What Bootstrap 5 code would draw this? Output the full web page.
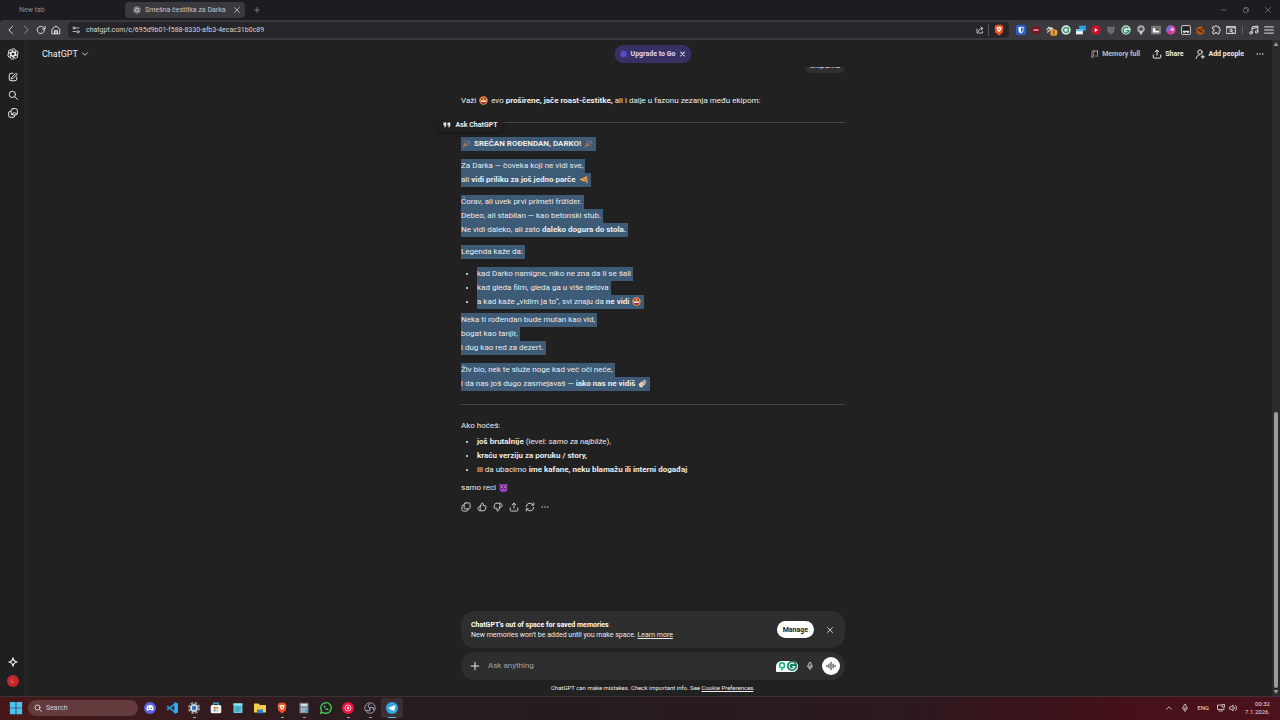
<!DOCTYPE html>
<html lang="sr-Latn" data-bs-theme="dark">
<head>
<meta charset="utf-8">
<meta name="viewport" content="width=device-width, initial-scale=1">
<title>Smešna čestitka za Darka</title>
<link href="https://cdn.jsdelivr.net/npm/bootstrap@5.3.0/dist/css/bootstrap.min.css" rel="stylesheet">
<style>
  body { font-family: Roboto, "Noto Sans", sans-serif; font-size: 8px; line-height: 14px; color: #ececec; background: #212121; }
  button, input { font: inherit; color: inherit; background: none; border: 0; padding: 0; line-height: inherit; }
  button { display: inline-flex; align-items: center; justify-content: center; }
  button svg { display: block; }
  b, strong { font-weight: 700; }
  svg.ln { fill: none; stroke: currentColor; stroke-width: 1.6; stroke-linecap: round; stroke-linejoin: round; }
  .s8 { width: 8px; height: 8px; } .s10 { width: 10px; height: 10px; } .s12 { width: 12px; height: 12px; } .s14 { width: 14px; height: 14px; }

  .tabstrip { height: 20px; background: #1d1c22; font-size: 7px; color: #8d8c92; }
  .tab-idle { width: 125px; padding-left: 19px; }
  .tab-live { width: 120px; height: 16px; background: #3a393f; border-radius: 4px; color: #c4c3c8; }
  .winbtns { gap: 14px; color: #77767c; }
  .toolbar { height: 20px; background: #3a393e; border-radius: 4px 0 0 0; color: #dcdcdf; }
  .navbtns { width: 68px; padding-left: 6px; gap: 5px; }
  .urlfield { height: 16px; background: #26252a; border-radius: 4px; gap: 6px; }
  .urlfield input { font-size: 7px; color: #d6d6d9; outline: 0; }
  .exts { gap: 5px; padding: 0 6px 0 7px; }
  .exts svg { width: 10px; height: 10px; }
  .exts .vr { margin: 3px 1px; }

  .rail { width: 26px; background: #1f1f1f; border-right: 1px solid #2c2c2c; padding: 8px 0 9px; gap: 8px; }
  .avatar { width: 12px; height: 12px; border-radius: 50%; background: #c3272d; font-size: 5px; color: #f2a9ab; }
  .chathead { height: 27px; font-size: 8px; }
  .chathead .title { font-size: 9px; gap: 3px; }
  .upgrade { height: 18px; padding: 0 5px; gap: 3px; border-radius: 9px; background: #373064; color: #dedafa; font-weight: 700; font-size: 7px; left: 50%; transform: translateX(-50%); }
  .acts { gap: 12px; font-size: 7px; font-weight: 700; }
  .acts button { gap: 3px; }

  .thread { width: 384px; max-width: 100%; }
  .thread p { margin-bottom: 8px; }
  .thread ul { padding-left: 16px; margin-bottom: 4px; }
  .thread hr { margin: 0; border-top: 1px solid #454545; opacity: 1; }
  .bubble { background: #2f2f2f; border-radius: 0 0 7px 7px; height: 6px; width: 40px; overflow: hidden; }
  .sel { display: block; width: fit-content; background: #3d5a76; padding-right: 2px; white-space: nowrap; }
  .emo { width: 9px; height: 9px; margin: 0 1px; vertical-align: -2px; }
  .askpop { left: -23px; top: 51px; height: 14px; width: 65px; gap: 4px; background: #202020; border-radius: 5px; box-shadow: 0 2px 4px rgba(0,0,0,.35); font-size: 7px; font-weight: 700; }
  .replyacts { gap: 6px; margin-top: 7px; color: #c9c9c9; }

  .notice { height: 37px; background: #2e2e2e; border-radius: 14px; padding: 0 11px 0 10px; font-size: 7px; line-height: 10px; }
  .manage { height: 17px; padding: 0 6px; border-radius: 9px; background: #fff; color: #1a1a1a; font-weight: 700; }
  .composer { height: 28px; background: #2e2e2e; border-radius: 14px; padding: 0 5px 0 9px; margin-top: 4px; }
  .composer input { outline: 0; font-size: 8px; }
  .composer input::placeholder { color: #a3a3a3; opacity: 1; }
  .grammar { width: 22px; height: 11px; background: #fff; border-radius: 6px 6px 6px 1px; }
  .voice { width: 18px; height: 18px; border-radius: 50%; background: #fff; color: #222; }
  .fineprint { font-size: 6px; height: 16px; }
  .fineprint a, .notice a { color: inherit; }
  .scroller { width: 8px; background: #2b2b2b; color: #9a9a9a; }
  .thumb { width: 4px; background: #9c9c9c; border-radius: 2px; margin-top: auto; height: 42%; }

  .taskbar { height: 24px; border-top: 1px solid #3d3133; padding: 0 0 1px 9px; background: linear-gradient(90deg, #481718 0, #3c1a1d 10%, #2c1c20 24%, #251d20 38%, #2b1a1e 70%, #451019 88%, #4b121c 100%); }
  .tasksearch { width: 110px; height: 16px; border-radius: 8px; background: #643b3c; padding-left: 6px; gap: 4px; margin: 0 1px 0 5px; }
  .tasksearch input { font-size: 7px; outline: 0; } .tasksearch input::placeholder { color: #d8cccc; opacity: 1; }
  .task { width: 22px; height: 20px; position: relative; border-radius: 3px; }
  .task.run::after { content: ""; position: absolute; bottom: 0; width: 3px; height: 1px; background: #a99ea0; }
  .task.cur { background: #3a2f33; } .task.cur::after { width: 8px; background: #5ab8e6; }
  .tray { gap: 8px; font-size: 6px; line-height: 8px; color: #e9dcde; padding-right: 10px; }
</style>
</head>
<body>
<svg class="d-none" aria-hidden="true">
  <symbol id="gpt" viewBox="0 0 24 24"><g fill="none" stroke="currentColor" stroke-width="1.8"><path id="petal" d="M12 7.2 7.8 9.6v6.6M12 7.2l5.3 3V5.8a4.3 4.3 0 0 0-8-2.2"/><use href="#petal" transform="rotate(60 12 12)"/><use href="#petal" transform="rotate(120 12 12)"/><use href="#petal" transform="rotate(180 12 12)"/><use href="#petal" transform="rotate(240 12 12)"/><use href="#petal" transform="rotate(300 12 12)"/></g></symbol>
  <symbol id="x" viewBox="0 0 16 16"><path d="m3 3 10 10M13 3 3 13"/></symbol>
  <symbol id="dots" viewBox="0 0 16 16"><g fill="currentColor" stroke="none"><circle cx="2.5" cy="8" r="1.5"/><circle cx="8" cy="8" r="1.5"/><circle cx="13.5" cy="8" r="1.5"/></g></symbol>
  <symbol id="share" viewBox="0 0 16 16"><path d="M8 10V2M5 4.500 8 1.500l3 3M2 9.500v3.500a1.500 1.500 0 0 0 1.500 1.500h9A1.500 1.500 0 0 0 14 13V9.500"/></symbol>
  <symbol id="search" viewBox="0 0 16 16"><circle cx="7" cy="7" r="5"/><path d="m11 11 4 4"/></symbol>
  <symbol id="mic" viewBox="0 0 16 16"><rect x="5.500" y="1" width="5" height="8.500" rx="2.500"/><path d="M3 7.500a5 5 0 0 0 10 0M8 12.500V15"/></symbol>
  <symbol id="laugh" viewBox="0 0 16 16"><circle cx="8" cy="8" r="7.500" fill="#f0a040"/><path d="M1.500 4.500a7.500 7.500 0 0 1 13 0z" fill="#e0605a"/><path d="m3.500 4.500 3 1.300-3 1.300M12.500 4.500l-3 1.300 3 1.300" fill="none" stroke="#4a2a22" stroke-width="1.200"/><path d="M2.500 8.500h11a5.500 5.500 0 0 1-11 0z" fill="#a82348"/><path d="M3.500 8.500h9v2h-9z" fill="#fff"/></symbol>
  <symbol id="party" viewBox="0 0 16 16"><path d="m1 15 4-9 5 5z" fill="#b0805c"/><path d="m2.500 12 2 2M4 8.500l4 4" stroke="#7a4d5d"/><path d="M7 6c0-3 2-3 1-5M10 9c3 0 3-2 5-1" stroke="#b0607c" stroke-width="1.400" fill="none"/><path d="M8.500 7.500 13 3" stroke="#5f9ac9" stroke-width="1.600"/><g fill="#c9695c"><circle cx="4" cy="3" r="1"/><circle cx="13" cy="12" r="1"/><circle cx="14" cy="5.500" r="1"/></g></symbol>
  <symbol id="brave" viewBox="0 0 16 16"><path d="M4.500 1h7L14 4l-1 7-5 4.500L3 11 2 4z" fill="#f2501e"/><path d="m4.500 4.500 3.500-.8 3.500.8-1 3.500L8 11 5.500 8z" fill="#fff"/><path d="M6.500 6h3L8 8.500z" fill="#f2501e"/></symbol>
  <symbol id="thumb" viewBox="0 0 16 16"><path d="M5 7 8 1.500c1.800 0 2.300 1 2 2.500L9.500 6H13c1.300 0 1.700 1 1.400 2l-1.300 4.500c-.3 1-1 1.500-2 1.500H5.500C3 14 1.500 12.800 1.500 10.500S3 7 5 7zM5 7v7"/></symbol>
</svg>

<div class="vh-100 d-flex flex-column overflow-hidden">
  <header>
    <div class="tabstrip d-flex align-items-center">
      <div class="tab-idle">New tab</div>
      <div class="tab-live d-flex align-items-center px-1">
        <svg class="s8 ms-1 me-1"><use href="#gpt"/></svg><span class="flex-fill">Smešna čestitka za Darka</span>
        <button aria-label="Zatvori karticu"><svg class="ln s8"><use href="#x"/></svg></button>
      </div>
      <button class="ms-2" aria-label="Nova kartica"><svg class="ln s8" viewBox="0 0 16 16"><path d="M8 3v10M3 8h10"/></svg></button>
      <div class="winbtns d-flex ms-auto me-2">
        <button aria-label="Umanji"><svg class="ln s8" viewBox="0 0 16 16"><path d="M3 8h9"/></svg></button>
        <button aria-label="Vrati"><svg class="ln s8" viewBox="0 0 16 16"><rect x="3" y="5" width="8" height="8" rx="2"/><path d="M6 3h5a2 2 0 0 1 2 2v5"/></svg></button>
        <button aria-label="Zatvori"><svg class="ln s8"><use href="#x"/></svg></button>
      </div>
    </div>
    <div class="toolbar d-flex align-items-center">
      <div class="navbtns d-flex align-items-center">
        <button aria-label="Nazad"><svg class="ln s10" viewBox="0 0 16 16"><path d="M10.500 2 4.500 8l6 6"/></svg></button>
        <button aria-label="Napred" class="opacity-50"><svg class="ln s10" viewBox="0 0 16 16"><path d="m5.500 2 6 6-6 6"/></svg></button>
        <button aria-label="Osveži"><svg class="ln s10" viewBox="0 0 16 16"><path d="M13.500 8A5.800 5.800 0 1 1 12 4l2 2M14.500 2v4.500H10"/></svg></button>
        <button aria-label="Početna"><svg class="ln s10" viewBox="0 0 16 16"><path d="M2 6.500 8 1.500l6 5V14H2zM5.500 14V9h5v5M8 9v5"/></svg></button>
      </div>
      <div class="urlfield flex-fill d-flex align-items-center px-1">
        <svg class="ln s8" viewBox="0 0 16 16"><circle cx="4" cy="4" r="2.200"/><path d="M8 4h6M2 11h6"/><circle cx="12" cy="11.500" r="2.200"/></svg>
        <input class="flex-fill" aria-label="Adresa" value="chatgpt.com/c/695d9b01-f588-8330-afb3-4ecac31b0c89">
        <div class="d-flex align-items-center gap-1">
          <svg class="ln s8" viewBox="0 0 16 16"><path d="M2 6v8h11v-3M5 11c0-4 3-6 8-6M10 2l4 3-4 3"/></svg>
          <span class="vr"></span>
          <svg class="s12"><use href="#brave"/></svg>
        </div>
      </div>
      <div class="exts d-flex align-items-center">
        <svg viewBox="0 0 16 16"><rect width="16" height="16" rx="3" fill="#2460cf"/><path d="M4 3h8v5c0 3-2 4.500-4 5.500C6 12.500 4 11 4 8z" fill="#fff"/><path d="M8 4.500h2.800V8c0 2-1.300 3-2.800 3.900z" fill="#2460cf"/></svg>
        <svg viewBox="0 0 16 16"><ellipse cx="8" cy="8" rx="7.500" ry="6" fill="#7d1420"/><path d="M4 6.500h8v3H4z" fill="#c98f98"/></svg>
        <svg viewBox="0 0 16 16" overflow="visible"><path d="M1 8c3-5 8-5 11-1M3 3l8 6M2 12l5-5" fill="none" stroke="#d5d0ce" stroke-width="2"/><rect x="7" y="7" width="11" height="10" rx="3" fill="#e9a13b"/><path d="M12.500 9v6" stroke="#4a3010" stroke-width="1.500"/></svg>
        <svg viewBox="0 0 16 16"><circle cx="8" cy="8" r="7.500" fill="#e4f0ea"/><circle cx="8" cy="8" r="4" fill="none" stroke="#3c9973" stroke-width="2.500"/></svg>
        <svg viewBox="0 0 16 16"><path d="M5 1h11v8H5z" fill="#2d9cdb"/><path d="M0 7h11v8H0z" fill="#eef7fb"/><path d="M0 7h11v3H0z" fill="#53b8e8"/></svg>
        <svg viewBox="0 0 16 16"><circle cx="8" cy="8" r="7.500" fill="#c9102a"/><path d="m6 5 5 3-5 3z" fill="#fff"/></svg>
        <svg viewBox="0 0 16 16"><path d="m2 2 3 1h6l3-1-1 9-5 4-5-4z" fill="#747477"/><path d="M5 7h2M9 7h2M8 10v2" stroke="#37373a" stroke-width="1.500"/></svg>
        <svg viewBox="0 0 16 16"><circle cx="8" cy="8" r="7.500" fill="#cfe5da"/><path d="M11.500 5A4.800 4.800 0 1 0 12.800 9H8.500" fill="none" stroke="#21875f" stroke-width="2"/></svg>
        <svg viewBox="0 0 16 16"><circle cx="8" cy="6.500" r="6" fill="#a7a7aa"/><circle cx="8" cy="6.500" r="3" fill="#4b4b4e"/><path d="M6 9h4v6H6z" fill="#c9c9cb"/></svg>
        <svg viewBox="0 0 16 16"><rect x="0" y="1" width="16" height="14" rx="2" fill="#77777b"/><rect x="3" y="5" width="10" height="7" fill="#fff"/><rect x="7" y="5" width="6" height="4" fill="#55555a"/></svg>
        <svg viewBox="0 0 16 16"><circle cx="8" cy="8" r="7.500" fill="#d44192"/><path d="M8 .5A7.500 7.500 0 0 0 1 11l7-3z" fill="#7c66dd"/><circle cx="10" cy="7" r="3" fill="#f4a8c9"/></svg>
        <svg viewBox="0 0 16 16"><rect x="1" y="1" width="14" height="14" rx="1" fill="#222" stroke="#ddd" stroke-width="1.500"/><path d="M3 9h10v2l-2 2-3-2-3 2-2-2z" fill="#ddd"/></svg>
        <svg viewBox="0 0 16 16"><circle cx="7" cy="9" r="6.500" fill="#b65317"/><path d="m8 8 6-6M3 7l7 5" stroke="#442516" stroke-width="2"/></svg>
        <svg class="ln" viewBox="0 0 16 16"><path d="M3 3h3a2 2 0 0 1 4 0h3v3a2 2 0 0 1 0 4v4h-3a2 2 0 0 0-4 0H3v-4a2 2 0 0 0 0-4z"/></svg>
        <svg class="ln" viewBox="0 0 16 16"><path d="M1 2.500h14v11H1zM1 4.500h14"/><circle cx="8" cy="9" r="2"/><path d="m9.500 10.500 2 2"/></svg>
        <span class="vr"></span>
        <svg class="ln" viewBox="0 0 16 16"><path d="M5 12V3l9-1.500v9M5 5.500 14 4"/><circle cx="3.200" cy="12.500" r="2"/><circle cx="12.200" cy="11" r="2"/></svg>
        <svg class="ln" viewBox="0 0 16 16"><path d="M1 3h14M1 8h14M1 13h14"/></svg>
      </div>
    </div>
  </header>

  <div class="d-flex flex-fill position-relative" style="min-height:0">
    <nav class="rail d-flex flex-column align-items-center">
      <button class="mb-1" aria-label="ChatGPT"><svg class="s12"><use href="#gpt"/></svg></button>
      <button class="mt-px" aria-label="Novi razgovor"><svg class="ln s10" viewBox="0 0 16 16"><path d="M8 2H5a3 3 0 0 0-3 3v6a3 3 0 0 0 3 3h6a3 3 0 0 0 3-3V8M6 8.500 12 2.500a1.400 1.400 0 0 1 2 2L8 10.500l-2.500.5z"/></svg></button>
      <button aria-label="Pretraga"><svg class="ln s10"><use href="#search"/></svg></button>
      <button aria-label="Slike"><svg class="ln s10" viewBox="0 0 16 16"><rect x="5" y="1" width="10" height="10" rx="3"/><path d="M4 5a3 3 0 0 0-3 3v4a3 3 0 0 0 3 3h4a3 3 0 0 0 3-3M5 11l5-4 4 3"/></svg></button>
      <button class="mt-auto" aria-label="Nadogradi"><svg class="ln s10" viewBox="0 0 16 16"><path d="M8 1.500C8.500 5 11 7.500 14.500 8 11 8.500 8.500 11 8 14.500 7.500 11 5 8.500 1.500 8 5 7.500 7.500 5 8 1.500z" stroke-width="2"/></svg></button>
      <button class="avatar" aria-label="Nalog">L</button>
    </nav>

    <main class="flex-fill d-flex flex-column position-relative">
      <div class="chathead d-flex align-items-center justify-content-between ps-3 pe-3 position-relative">
        <button class="title">ChatGPT <svg class="ln s8" viewBox="0 0 16 16"><path d="m3 5.500 5 5 5-5"/></svg></button>
        <button class="upgrade position-absolute text-nowrap"><svg class="s8" viewBox="0 0 16 16"><path d="M8 0l2 3 4-1-1 4 3 2-3 2 1 4-4-1-2 3-2-3-4 1 1-4-3-2 3-2-1-4 4 1z" fill="#5a49d6"/></svg>Upgrade to Go<svg class="ln s8" viewBox="-3 -3 22 22"><path d="m3 3 10 10M13 3 3 13" stroke-width="3"/></svg></button>
        <div class="acts d-flex align-items-center">
          <button class="text-nowrap opacity-75"><svg class="ln s8" viewBox="0 0 16 16"><path d="M2 14V4a2 2 0 0 1 2-2h9v7M2 14h3M6 2v3M9 12h5M13 2v3M5 8v3"/></svg>Memory full</button>
          <button><svg class="ln s10"><use href="#share"/></svg>Share</button>
          <button><svg class="ln s10" viewBox="0 0 16 16"><circle cx="8" cy="5" r="3.500"/><path d="M2 15c0-3 2-5 5-5.500M12.500 10v5M10 12.500h5"/></svg>Add people</button>
          <button aria-label="Još"><svg class="s8"><use href="#dots"/></svg></button>
        </div>
      </div>

      <section class="thread mx-auto flex-fill position-relative">
        <div class="bubble ms-auto d-flex align-items-end justify-content-center"><span>ekipama</span></div>
        <p style="margin-top:21px;margin-bottom:14px">Važi <svg class="emo"><use href="#laugh"/></svg> evo <b>proširene, jače roast-čestitke,</b> ali i dalje u fazonu zezanja među ekipom:</p>
        <hr>
        <button class="askpop position-absolute"><svg class="s8" viewBox="0 0 16 16"><path d="M1 3h5.500v5c0 3-1.500 4.500-4 5v-2c1-.3 1.600-1 1.700-2H1zM9 3h5.500v5c0 3-1.500 4.500-4 5v-2c1-.3 1.600-1 1.700-2H9z" fill="currentColor"/></svg>Ask ChatGPT</button>
        <p style="margin-top:14px"><span class="sel"><svg class="emo"><use href="#party"/></svg> <b>SREĆAN ROĐENDAN, DARKO!</b> <svg class="emo"><use href="#party"/></svg></span></p>
        <p><span class="sel">Za Darka — čoveka koji ne vidi sve,</span><span class="sel">ali <b>vidi priliku za još jedno parče</b> <svg class="emo" viewBox="0 0 16 16"><path d="M1 8 13 2l2 12z" fill="#f1b84b"/><path d="m12 1 3 1 1 12-2 1z" fill="#c27a32"/><circle cx="9" cy="7" r="1.500" fill="#c93a2c"/><circle cx="11" cy="11" r="1.500" fill="#c93a2c"/></svg></span></p>
        <p><span class="sel">Ćorav, ali uvek prvi primeti frižider.</span><span class="sel">Debeo, ali stabilan — kao betonski stub.</span><span class="sel">Ne vidi daleko, ali zato <b>daleko dogura do stola.</b></span></p>
        <p><span class="sel">Legenda kaže da:</span></p>
        <ul>
          <li><span class="sel">kad Darko namigne, niko ne zna da li se šali</span></li>
          <li><span class="sel">kad gleda film, gleda ga u više delova</span></li>
          <li><span class="sel">a kad kaže „vidim ja to“, svi znaju da <b>ne vidi</b> <svg class="emo"><use href="#laugh"/></svg></span></li>
        </ul>
        <p><span class="sel">Neka ti rođendan bude mutan kao vid,</span><span class="sel">bogat kao tanjir,</span><span class="sel">i dug kao red za dezert.</span></p>
        <p><span class="sel">Živ bio, nek te služe noge kad već oči neće,</span><span class="sel">i da nas još dugo zasmejavaš — <b>iako nas ne vidiš</b> <svg class="emo" viewBox="0 0 16 16"><path d="m1 9 6-5 4 6-4 5-4-1z" fill="#e6d9c5"/><path d="m8 3 4-2 3 4-3 6-2-1z" fill="#cdb795"/><path d="m5 8 3 4M10 3l3 4" stroke="#8a7a66"/></svg></span></p>
        <hr style="margin-top:13px">
        <p style="margin-top:14px;margin-bottom:2px">Ako hoćeš:</p>
        <ul>
          <li><b>još brutalnije</b> (level: <i>samo za najbliže</i>),</li>
          <li><b>kraću verziju za poruku / story,</b></li>
          <li>ili da ubacimo <b>ime kafane, neku blamažu ili interni događaj</b></li>
        </ul>
        <p class="mb-0">samo reci <svg class="emo" viewBox="0 0 16 16"><path d="M1 1l3 1h8l3-1v9a7 6 0 0 1-14 0z" fill="#9b3fc0"/><path d="M2 6h12l-1 4H9.500L8 8l-1.500 2H3z" fill="#4a1f66"/><path d="M3.500 7.500h3M9.500 7.500h3" stroke="#fff" stroke-width="1.500"/></svg></p>
        <div class="replyacts d-flex">
          <button aria-label="Kopiraj"><svg class="ln s10" viewBox="0 0 16 16"><rect x="5" y="1.500" width="9.500" height="9.500" rx="2"/><path d="M5 5H3.500a2 2 0 0 0-2 2v5.500a2 2 0 0 0 2 2H9a2 2 0 0 0 2-2V11"/></svg></button>
          <button aria-label="Dobar odgovor"><svg class="ln s10"><use href="#thumb"/></svg></button>
          <button aria-label="Loš odgovor"><svg class="ln s10" viewBox="0 0 16 16"><use href="#thumb" transform="rotate(180 8 8)" width="16" height="16"/></svg></button>
          <button aria-label="Podeli"><svg class="ln s10"><use href="#share"/></svg></button>
          <button aria-label="Ponovi"><svg class="ln s10" viewBox="0 0 16 16"><path d="M2 7.500A6 6 0 0 1 13 4.500M14 1.500v3.500h-3.500M14 8.500A6 6 0 0 1 3 11.500M2 14.500V11h3.500"/></svg></button>
          <button aria-label="Još opcija"><svg class="s8"><use href="#dots"/></svg></button>
        </div>
      </section>

      <footer class="thread mx-auto">
        <div class="notice d-flex align-items-center">
          <div class="flex-fill"><b class="d-block text-white">ChatGPT's out of space for saved memories</b>New memories won't be added until you make space. <a href="#">Learn more</a></div>
          <button class="manage">Manage</button>
          <button class="ms-2 ps-1" aria-label="Zatvori obaveštenje"><svg class="ln s8"><use href="#x"/></svg></button>
        </div>
        <div class="composer d-flex align-items-center">
          <button aria-label="Dodaj"><svg class="ln s10" viewBox="0 0 16 16"><path d="M8 2v12M2 8h12"/></svg></button>
          <input class="flex-fill ms-2" aria-label="Poruka" placeholder="Ask anything">
          <span class="grammar d-flex align-items-center justify-content-center"><svg class="s10" viewBox="0 0 16 16"><circle cx="8" cy="7" r="4" fill="none" stroke="#17b885" stroke-width="2.500"/><path d="M6 14h4" stroke="#17b885" stroke-width="2"/></svg><svg class="s10" viewBox="0 0 16 16"><circle cx="8" cy="8" r="8" fill="#0c7c5c"/><path d="M11.500 5A4.600 4.600 0 1 0 12.500 9H8.500" fill="none" stroke="#fff" stroke-width="1.700"/></svg></span>
          <button class="mx-2" aria-label="Diktiraj"><svg class="ln s8"><use href="#mic"/></svg></button>
          <button class="voice" aria-label="Glasovni režim"><svg class="ln s10" viewBox="0 0 16 16"><path d="M1.500 7v2M4.700 5v6M8 2v12M11.300 5v6M14.500 7v2"/></svg></button>
        </div>
        <div class="fineprint d-flex align-items-center justify-content-center"><span>ChatGPT can make mistakes. Check important info. See <a href="#">Cookie Preferences</a>.</span></div>
      </footer>
    </main>
    <div class="scroller position-absolute end-0 top-0 bottom-0 d-flex flex-column align-items-center">
      <svg class="s8" viewBox="0 0 16 16"><path d="m8 4 5 8H3z" fill="currentColor"/></svg>
      <div class="thumb"></div>
      <svg class="s8" viewBox="0 0 16 16"><path d="m8 12 5-8H3z" fill="currentColor"/></svg>
    </div>
  </div>

  <footer class="taskbar d-flex align-items-center">
    <button aria-label="Start"><svg class="s14" viewBox="0 0 16 16"><path d="M1 1h6.600v6.600H1zM8.400 1H15v6.600H8.400zM1 8.400h6.600V15H1zM8.400 8.400H15V15H8.400z" fill="#4cc2f4"/></svg></button>
    <div class="tasksearch d-flex align-items-center"><svg class="ln s8"><use href="#search"/></svg><input class="w-75" aria-label="Search" placeholder="Search"></div>
    <button class="task" aria-label="Discord"><svg class="s12" viewBox="0 0 16 16"><circle cx="8" cy="8" r="8" fill="#5b62e8"/><path d="M4.500 5c2-1.300 5-1.300 7 0 1 2 1.500 3.500 1.300 5.500-1 .8-2 1-2.500 1l-.6-1H6.300l-.6 1c-.8 0-1.600-.3-2.500-1C3 8.500 3.500 7 4.500 5z" fill="#fff"/><circle cx="6.200" cy="8.200" r="1" fill="#5b62e8"/><circle cx="9.800" cy="8.200" r="1" fill="#5b62e8"/></svg></button>
    <button class="task" aria-label="Visual Studio Code"><svg class="s12" viewBox="0 0 16 16"><path d="M12 2.500 1.500 10.500M12 13.500 1.500 5.500" stroke="#2797dc" stroke-width="2.500"/><path d="m11 0 5 2v12l-5 2z" fill="#35a9ee"/></svg></button>
    <button class="task run" aria-label="Podešavanja"><svg class="s12" viewBox="0 0 16 16"><circle cx="8" cy="8" r="6" fill="none" stroke="#8d949c" stroke-width="4" stroke-dasharray="3 1.700"/><circle cx="8" cy="8" r="5.500" fill="#b6bdc5"/><circle cx="8" cy="8" r="4" fill="#e6ebf0"/><circle cx="8" cy="8" r="3" fill="#2b72b8"/></svg></button>
    <button class="task" aria-label="Prodavnica"><svg class="s12" viewBox="0 0 16 16"><path d="M5 4V1.500h6V4" fill="none" stroke="#4db4e8" stroke-width="1.500"/><rect x="1" y="4" width="14" height="11" rx="2" fill="#f2f2f4"/><path d="M5 6.500h2.500V9H5z" fill="#e85331"/><path d="M8.500 6.500H11V9H8.500z" fill="#78b829"/><path d="M5 10h2.500v2.500H5z" fill="#2a9de0"/><path d="M8.500 10H11v2.500H8.500z" fill="#f2b82e"/></svg></button>
    <button class="task" aria-label="Beležnica"><svg class="s12" viewBox="0 0 16 16"><rect x="2" y="1.500" width="12" height="13" rx="1" fill="#62cbdd"/><path d="M2 3h12" stroke="#d8f6fa" stroke-width="2" stroke-dasharray="1.500 1"/><path d="M4 7h8M4 9.500h8M4 12h6" stroke="#21839c"/></svg></button>
    <button class="task" aria-label="Datoteke"><svg class="s12" viewBox="0 0 16 16"><path d="M0 2h6l2 2h8v10H0z" fill="#f6ca4d"/><path d="M4 10h8v5H4z" fill="#2c82c9"/></svg></button>
    <button class="task run" aria-label="Brave"><svg class="s12"><use href="#brave"/></svg></button>
    <button class="task run" aria-label="Kalkulator"><svg class="s12" viewBox="0 0 16 16"><rect x="2" y="1" width="12" height="14" rx="1" fill="#73838f"/><rect x="3.500" y="2.500" width="9" height="3" fill="#cce8f2"/><path d="M4 8h8M4 10.500h8M4 13h8" stroke="#dce5eb" stroke-width="1.500" stroke-dasharray="2 1"/><path d="M10 10h2.500v4H10z" fill="#3daae0"/></svg></button>
    <button class="task" aria-label="WhatsApp"><svg class="s12" viewBox="0 0 16 16"><path d="m1 15 1-3.500A7 7 0 1 1 4.500 14z" fill="none" stroke="#3ed565" stroke-width="1.700"/><path d="M5.500 4.500c-1.500 2 3 7.500 6 6l-.2-1.300-1.700-.8-.8.900C7.600 8.700 7 8 6.600 7l.7-.9-.6-1.600z" fill="#3ed565"/></svg></button>
    <button class="task run" aria-label="YouTube Music"><svg class="s12" viewBox="0 0 16 16"><circle cx="8" cy="8" r="8" fill="#ed123f"/><circle cx="8" cy="8" r="4" fill="none" stroke="#fff"/><path d="m6.800 5.800 3.700 2.200-3.700 2.200z" fill="#fff"/></svg></button>
    <button class="task run" aria-label="OBS"><svg class="s12" viewBox="0 0 16 16"><circle cx="8" cy="8" r="7" fill="#25222a" stroke="#b9b5bb"/><g fill="none" stroke="#c9c5cb" stroke-width="1.200"><path id="blade" d="M8 8C4.500 7 5 3.500 8 2.500"/><use href="#blade" transform="rotate(120 8 8)"/><use href="#blade" transform="rotate(240 8 8)"/></g></svg></button>
    <button class="task run cur" aria-label="Telegram"><svg class="s12" viewBox="0 0 16 16"><circle cx="8" cy="8" r="8" fill="#32a8e2"/><path d="m3 8 9.500-4-1.500 8.500-3-2.200-1.500 1.500L6 9.500z" fill="#fff"/></svg></button>
    <div class="tray d-flex align-items-center ms-auto">
      <svg class="ln s8" viewBox="0 0 16 16"><path d="m3 10.500 5-5 5 5"/></svg>
      <svg class="ln s8"><use href="#mic"/></svg>
      <span>ENG</span>
      <span class="d-flex gap-1"><svg class="ln s8" viewBox="0 0 16 16"><path d="M9 2H1v9h13V8M4 14h7"/><rect x="11" y="1" width="4" height="5"/></svg><svg class="ln s8" viewBox="0 0 16 16"><path d="M1 6h3l4-4v12L4 10H1zM10.500 5.500c1.500 1 1.500 4 0 5M13 3c3 3 3 7 0 10"/></svg></span>
      <time class="text-end">00:32<br>7.1.2026.</time>
    </div>
  </footer>
</div>
<script src="https://cdn.jsdelivr.net/npm/bootstrap@5.3.0/dist/js/bootstrap.bundle.min.js"></script>
</body>
</html>
